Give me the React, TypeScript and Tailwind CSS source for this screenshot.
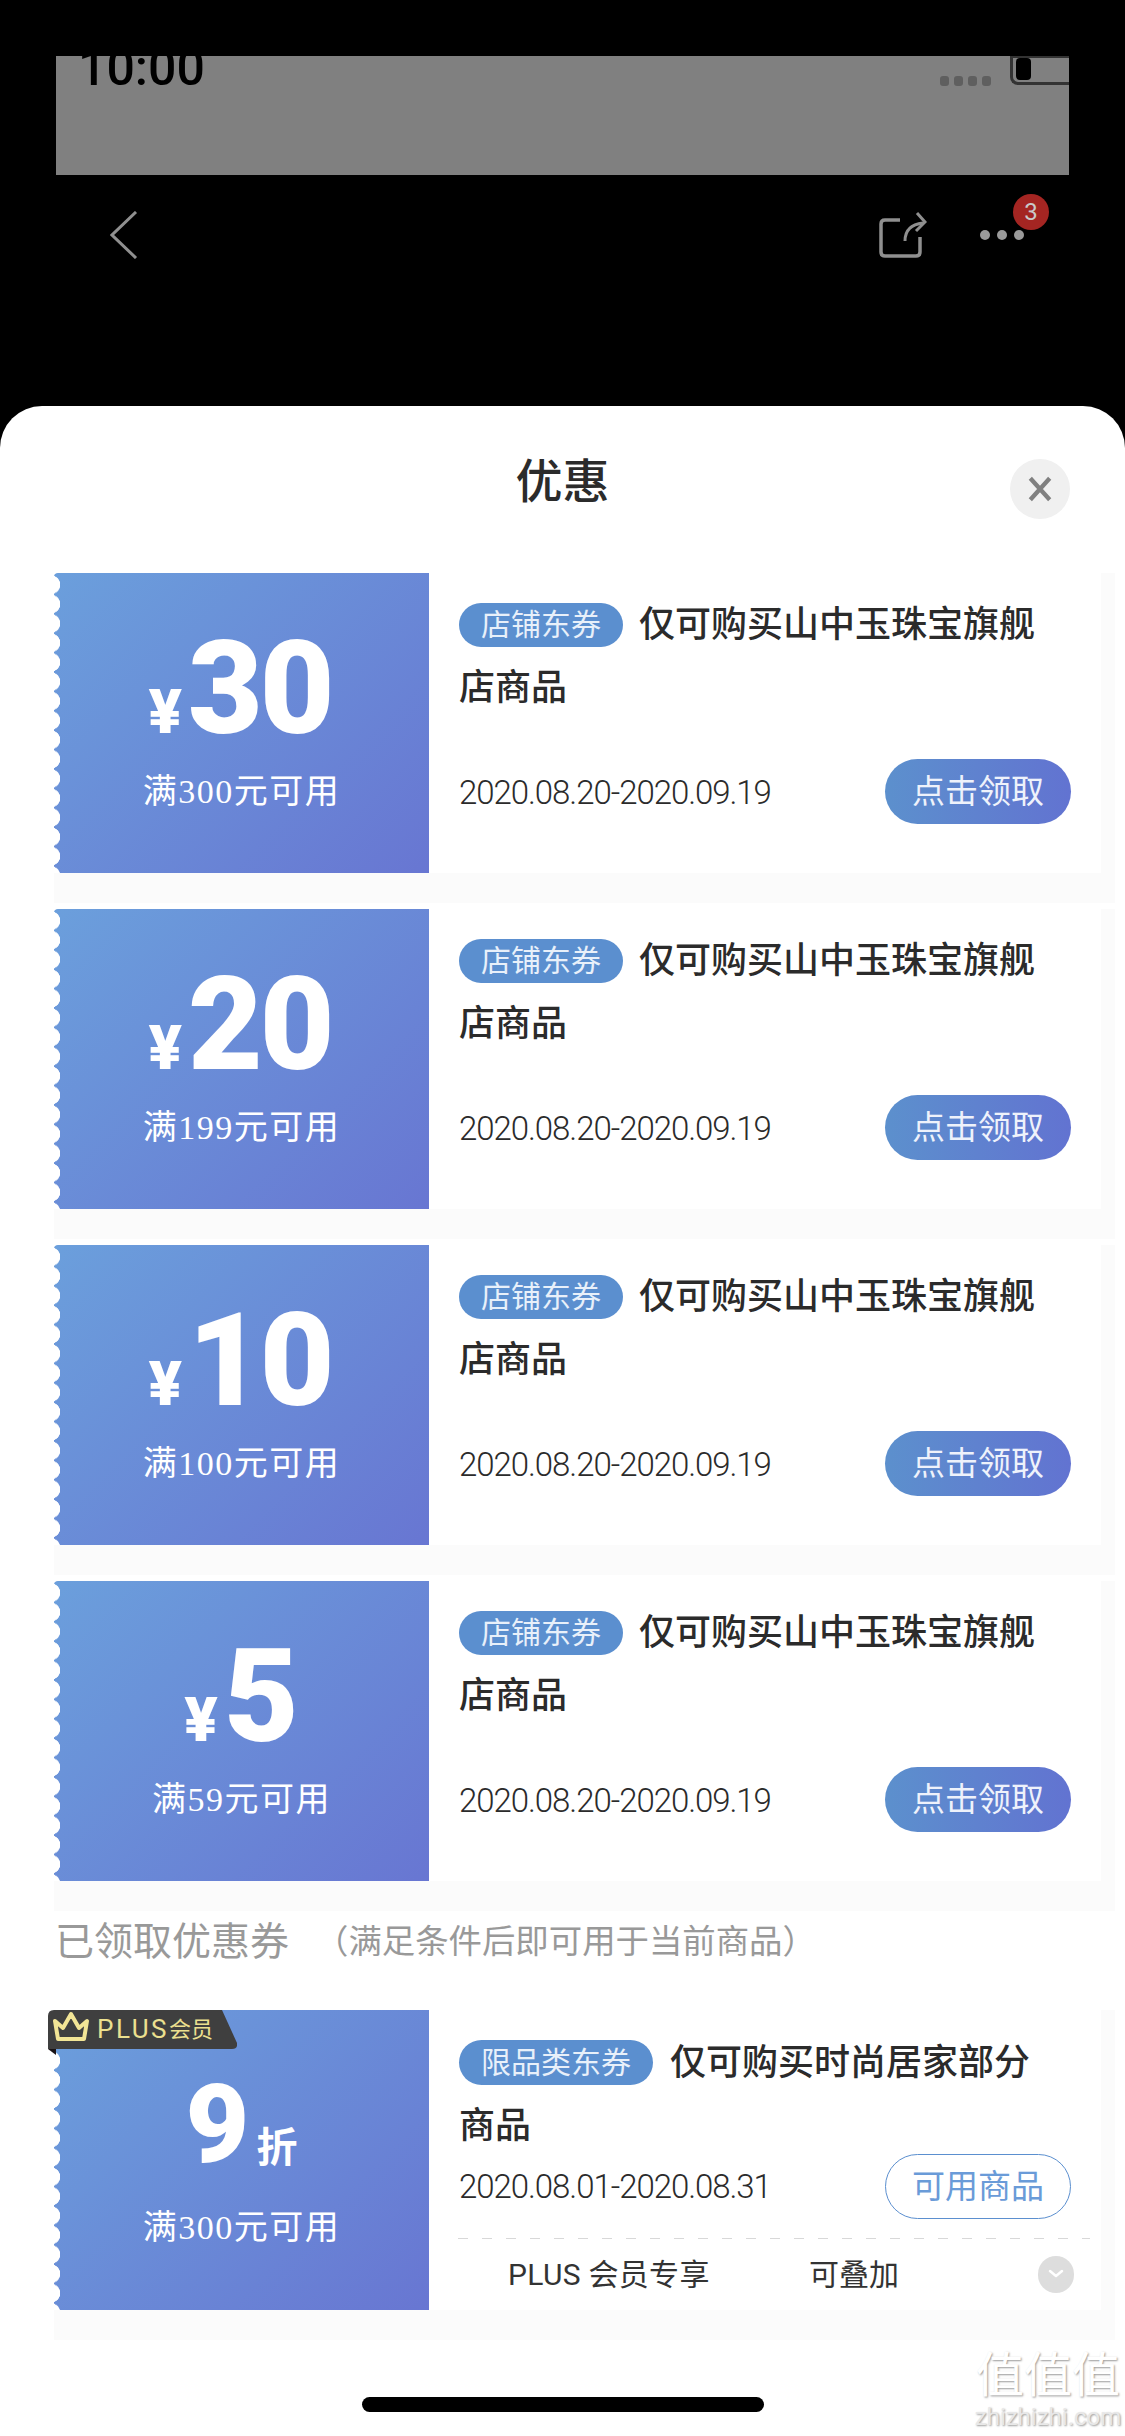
import React from "react";

const cjk = "font-['Roboto','Noto_Sans_CJK_SC',sans-serif]";

function Scallops() {
  return (
    <div className="absolute left-0 top-0 bottom-0 w-[8px] bg-[radial-gradient(circle_at_-3px_50%,#ffffff_9px,transparent_9.5px)] bg-[length:8px_19.4px] bg-[position:0_2px]" />
  );
}

function Left({ children, limit }: { children: React.ReactNode; limit: string }) {
  return (
    <div className="relative w-[375px] h-[300px] shrink-0 flex flex-col items-center rounded-l-[4px] bg-[linear-gradient(135deg,#6b9fdc_0%,#6876d2_100%)] text-white">
      <Scallops />
      {children}
      <div className="text-[34px] leading-[50px] tracking-[1.5px] font-['Liberation_Serif','Noto_Sans_CJK_SC',serif]">{limit}</div>
    </div>
  );
}

function Amount({ value }: { value: string }) {
  return (
    <div className="mt-[68px] mb-[30px] h-[96px] flex items-baseline">
      <span className="text-[62px] leading-[96px] font-black mr-[6px]">¥</span>
      <span className="text-[129px] leading-[96px] font-black tracking-[-3px] pr-[3px]">{value}</span>
    </div>
  );
}

function Coupon({ value, limit }: { value: string; limit: string }) {
  return (
    <div className="w-[1061px] ml-[54px] mb-[6px] pr-[14px] pb-[30px] bg-[#fbfbfb]">
      <div className="flex h-[300px] bg-white">
        <Left limit={limit}>
          <Amount value={value} />
        </Left>
        <div className="flex-1 pl-[30px] pr-[30px] pt-[21px]">
          <div className="mr-[35px] text-[36px] leading-[63px] font-medium text-[#2b2b2b] h-[126px]">
            <span className="inline-flex items-center justify-center align-middle h-[44px] px-[22px] mr-[16px] mb-[5px] rounded-full bg-[#5b8fcf] text-[30px] font-normal text-[#e8f0fa]">店铺东券</span>
            仅可购买山中玉珠宝旗舰店商品
          </div>
          <div className="mt-[39px] flex items-center justify-between">
            <span className="mt-[2px] text-[33px] font-light tracking-[-1.05px] text-[#2b2b2b]">2020.08.20-2020.09.19</span>
            <span className="w-[186px] h-[65px] rounded-full flex items-center justify-center bg-[linear-gradient(90deg,#5c90cd,#6273d1)] text-[33px] text-[#eef2fb]">点击领取</span>
          </div>
        </div>
      </div>
    </div>
  );
}

function PlusBadge() {
  return (
    <div className="absolute left-[-6px] top-0 w-[189px] h-[45px]">
      <svg className="absolute inset-0" width="189" height="45" viewBox="0 0 189 45">
        <path d="M0 39 L8 39 L8 45 Z" fill="#1a1214" />
        <path d="M6 0 L174 0 L189 33 Q190 39 184 39 L0 39 L0 6 Q0 0 6 0 Z" fill="#3f3f3f" />
        <path d="M7 11 L15 18 L23 4 L31 18 L39 11 L36 29 L10 29 Z" fill="none" stroke="#f2e596" strokeWidth="4" strokeLinejoin="round" />
      </svg>
      <div className="absolute left-[49px] top-0 h-[39px] flex items-center text-[#ece08f] whitespace-nowrap">
        <span className="text-[26px] tracking-[2.5px]">PLUS</span>
        <span className="text-[22px]">会员</span>
      </div>
    </div>
  );
}

function ClaimedCoupon() {
  return (
    <div className="w-[1061px] ml-[54px] pr-[14px] pb-[30px] bg-[#fbfbfb]">
      <div className="flex h-[300px] bg-white">
        <Left limit="满300元可用">
          <PlusBadge />
          <div className="mt-[76px] mb-[40px] h-[77px] flex items-baseline">
            <span className="text-[110px] leading-[77px] font-black mr-[7px]">9</span>
            <span className="text-[41px] leading-[77px] font-bold">折</span>
          </div>
        </Left>
        <div className="flex-1 pl-[30px] pr-[30px] pt-[22px]">
          <div className="mr-[35px] text-[36px] leading-[63px] font-medium text-[#2b2b2b] h-[122px]">
            <span className="inline-flex items-center justify-center align-middle h-[45px] px-[22px] mr-[17px] mb-[6px] rounded-full bg-[#5b8fcf] text-[30px] font-normal text-[#e8f0fa]">限品类东券</span>
            仅可购买时尚居家部分商品
          </div>
          <div className="flex items-center justify-between">
            <span className="text-[33px] font-light tracking-[-1.05px] text-[#2b2b2b]">2020.08.01-2020.08.31</span>
            <span className="w-[186px] h-[65px] rounded-full border border-[#5b8fcf] flex items-center justify-center text-[33px] text-[#6a9bd8]">可用商品</span>
          </div>
          <div className="mt-[19px] mr-[-19px] ml-[-1px] h-[1px] bg-[repeating-linear-gradient(90deg,#d8d8d8_0_10px,transparent_10px_24px)]" />
          <div className="flex items-center h-[70px] mr-[-3px] text-[30px] text-[#333333]">
            <span className="ml-[49px] w-[301px] tracking-[0.3px]">PLUS 会员专享</span>
            <span>可叠加</span>
            <span className="ml-auto w-[36px] h-[37px] rounded-full bg-[#dddddd] flex items-center justify-center">
              <svg width="18" height="12" viewBox="0 0 18 12" fill="none">
                <path d="M3 3 L9 8 L15 3" stroke="#ffffff" strokeWidth="2.5" strokeLinecap="round" strokeLinejoin="round" />
              </svg>
            </span>
          </div>
        </div>
      </div>
    </div>
  );
}

export default function App() {
  return (
    <div className={`relative w-[1125px] h-[2436px] overflow-hidden bg-black flex flex-col ${cjk}`}>
      <div className="mt-[56px] mx-[56px] h-[119px] shrink-0 bg-[#808080] overflow-hidden flex items-start justify-between">
        <div className="ml-[22px] mt-[-16px] text-[50px] leading-[56px] font-medium text-black">10:00</div>
        <div className="flex items-start">
          <div className="flex gap-[5px] mt-[20px] mr-[19px]">
            <span className="w-[9px] h-[10px] rounded-[3px] bg-[#5f5f5f]" />
            <span className="w-[9px] h-[10px] rounded-[3px] bg-[#5f5f5f]" />
            <span className="w-[9px] h-[10px] rounded-[3px] bg-[#5f5f5f]" />
            <span className="w-[9px] h-[10px] rounded-[3px] bg-[#5f5f5f]" />
          </div>
          <div className="w-[59px] h-[30px] mt-[-1px] border-[3px] border-l-[3px] border-r-0 border-[#333333] rounded-bl-[8px] pl-[3px]">
            <div className="w-[15px] h-[22px] bg-black rounded-[4px]" />
          </div>
        </div>
      </div>

      <div className="mx-[56px] h-[120px] shrink-0 flex items-center pl-[54px]">
        <svg width="28" height="48" viewBox="0 0 28 48" fill="none">
          <path d="M26 1 L2 24 L26 47" stroke="#8f8f8f" strokeWidth="3" />
        </svg>
        <svg className="ml-auto" width="48" height="48" viewBox="0 0 48 48" fill="none">
          <path d="M21 9 H6 Q2 9 2 13 V41 Q2 45 6 45 H37 Q41 45 41 41 V26" stroke="#8f8f8f" strokeWidth="3.5" />
          <path d="M26 30 Q26 14 44 12" stroke="#8f8f8f" strokeWidth="3" />
          <path d="M38 2 L46 11 L37 20" stroke="#8f8f8f" strokeWidth="3" />
        </svg>
        <div className="relative ml-[53px] mr-[45px] flex gap-[7px]">
          <span className="w-[10px] h-[10px] rounded-full bg-[#9a9a9a]" />
          <span className="w-[10px] h-[10px] rounded-full bg-[#9a9a9a]" />
          <span className="w-[10px] h-[10px] rounded-full bg-[#9a9a9a]" />
          <span className="absolute left-[33px] top-[-36px] w-[36px] h-[36px] rounded-full bg-[#a42522] flex items-center justify-center text-[24px] leading-none text-[#c9c9c9]">3</span>
        </div>
      </div>

      <div className="mt-[111px] flex-1 bg-white rounded-t-[42px] flex flex-col">
        <div className="h-[148px] mb-[19px] shrink-0 grid grid-cols-[1fr_auto_1fr] items-center">
          <div />
          <div className="text-[47px] font-medium text-[#2b2b2b] mt-[4px]">优惠</div>
          <div className="flex justify-end pr-[55px] mt-[18px]">
            <span className="w-[60px] h-[60px] rounded-full bg-[#f0f0f0] flex items-center justify-center">
              <svg width="28" height="28" viewBox="0 0 26 26" fill="none">
                <path d="M4 3 L22 23 M22 3 L4 23" stroke="#808080" strokeWidth="4" />
              </svg>
            </span>
          </div>
        </div>

        <Coupon value="30" limit="满300元可用" />
        <Coupon value="20" limit="满199元可用" />
        <Coupon value="10" limit="满100元可用" />
        <div className="mb-[-6px]">
          <Coupon value="5" limit="满59元可用" />
        </div>

        <div className="ml-[55px] h-[63px] mb-[36px] flex items-center whitespace-nowrap text-[#999999]">
          <span className="text-[39px]">已领取优惠券</span>
          <span className="ml-[26px] text-[33.4px]">（满足条件后即可用于当前商品）</span>
        </div>

        <ClaimedCoupon />

        <div className="mt-[57px] mx-auto w-[402px] h-[15px] rounded-full bg-black" />
      </div>

      <div className="absolute right-[4px] bottom-[4px] w-[146px] flex flex-col items-center text-white [text-shadow:1px_1px_2px_#9a9a9a]">
        <div className="text-[48px] leading-[52px]">值值值</div>
        <div className="text-[24px] leading-[30px] text-[#e8e8e8]">zhizhizhi.com</div>
      </div>
    </div>
  );
}
